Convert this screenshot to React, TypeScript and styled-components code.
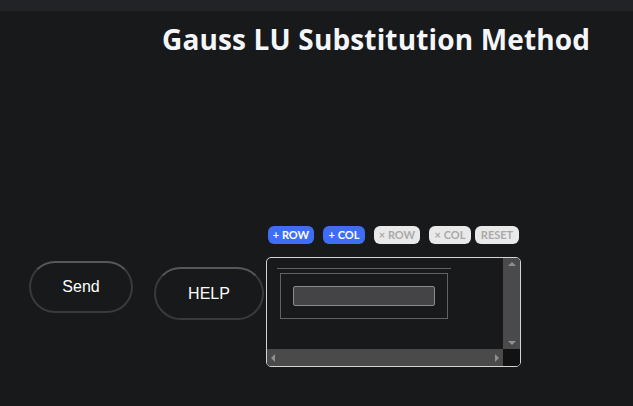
import React from "react";
import styled, { createGlobalStyle } from "styled-components";

const Global = createGlobalStyle`
  html, body { margin: 0; padding: 0; background: #18191b; }
  body { width: 633px; height: 406px; overflow: hidden; font-family: "Liberation Sans", Arial, sans-serif; }
  * { box-sizing: border-box; }
`;

const Page = styled.div`
  display: flex;
  flex-direction: column;
  width: 633px;
  height: 406px;
  background: #18191b;
`;

const TopBar = styled.div`
  height: 11px;
  background: #222326;
`;

const Title = styled.h1`
  margin: 10px 0 0 162px;
  font-family: "Open Sans", "Noto Sans", sans-serif;
  font-weight: 700;
  font-size: 28px;
  letter-spacing: 0.15px;
  line-height: 36px;
  color: #f4f6fa;
  white-space: nowrap;
`;

const Main = styled.div`
  display: flex;
  align-items: flex-start;
  margin-top: 169px;
  padding-left: 29px;
`;

const PillButton = styled.button<{ $w: number; $h: number; $top: number; $ml: number }>`
  width: ${(p) => p.$w}px;
  height: ${(p) => p.$h}px;
  margin-top: ${(p) => p.$top}px;
  margin-left: ${(p) => p.$ml}px;
  border-radius: 999px;
  background: #18191b;
  border: 2px solid #3a3a3b;
  border-top-color: #585859;
  color: #ffffff;
  font-family: "Liberation Sans", Arial, sans-serif;
  font-size: 16px;
  padding: 0;
  flex: none;
`;

const Panel = styled.div`
  display: flex;
  flex-direction: column;
  margin-left: 2px;
`;

const Toolbar = styled.div`
  display: flex;
  padding-left: 2px;
  height: 18px;
`;

const ToolButton = styled.button<{ $primary?: boolean; $w: number; $ml: number }>`
  width: ${(p) => p.$w}px;
  height: 18px;
  margin-left: ${(p) => p.$ml}px;
  padding: 0;
  border: none;
  border-radius: 6px;
  background: ${(p) => (p.$primary ? "#3d6ef5" : "#e9e9e9")};
  color: ${(p) => (p.$primary ? "#ffffff" : "#a9a9a9")};
  font-family: Lato, "Open Sans", sans-serif;
  font-weight: 700;
  font-size: 11px;
  line-height: 18px;
  white-space: nowrap;
  flex: none;
`;

const MatrixBox = styled.div`
  margin-top: 13px;
  width: 255px;
  height: 110px;
  border: 1px solid #d4d4d6;
  border-radius: 5px;
  overflow: hidden;
  background: #18191b;
  display: grid;
  grid-template-columns: 1fr 17px;
  grid-template-rows: 1fr 17px;
`;

const Content = styled.div`
  overflow: hidden;
  padding: 10px 0 0 10px;
`;

const Rule = styled.div`
  width: 174px;
  height: 1px;
  background: #5f6368;
`;

const Frame = styled.div`
  margin: 4px 0 0 3px;
  width: 168px;
  height: 46px;
  border: 1px solid #5f6368;
  padding: 12px 12px;
`;

const Cell = styled.input`
  display: block;
  width: 142px;
  height: 20px;
  background: #444446;
  border: 1px solid #8a8a8c;
  border-radius: 2px;
  padding: 0 4px;
  color: #fff;
  outline: none;
`;

const ScrollTrack = styled.div<{ $vertical?: boolean }>`
  background: #4a4a4a;
  display: flex;
  flex-direction: ${(p) => (p.$vertical ? "column" : "row")};
  justify-content: space-between;
  align-items: center;
  padding: ${(p) => (p.$vertical ? "4px 0" : "0 4px")};
`;

const Corner = styled.div`
  background: #121213;
`;

const Arrow = ({ dir }: { dir: "up" | "down" | "left" | "right" }) => {
  const pts: Record<string, string> = {
    up: "0,4 4,0 8,4",
    down: "0,0 8,0 4,4",
    left: "4,0 4,8 0,4",
    right: "0,0 0,8 4,4",
  };
  const vertical = dir === "up" || dir === "down";
  return (
    <svg width={vertical ? 8 : 4} height={vertical ? 4 : 8} viewBox={vertical ? "0 0 8 4" : "0 0 4 8"}>
      <polygon points={pts[dir]} fill="#8f8f8f" />
    </svg>
  );
};

export default function App() {
  return (
    <Page>
      <Global />
      <TopBar />
      <Title>Gauss LU Substitution Method</Title>
      <Main>
        <PillButton $w={104} $h={52} $top={35} $ml={0}>Send</PillButton>
        <PillButton $w={110} $h={53} $top={41} $ml={21}>HELP</PillButton>
        <Panel>
          <Toolbar>
            <ToolButton $primary $w={46} $ml={0}>+ ROW</ToolButton>
            <ToolButton $primary $w={42} $ml={9}>+ COL</ToolButton>
            <ToolButton $w={46} $ml={9}>× ROW</ToolButton>
            <ToolButton $w={42} $ml={9}>× COL</ToolButton>
            <ToolButton $w={44} $ml={4}>RESET</ToolButton>
          </Toolbar>
          <MatrixBox>
            <Content>
              <Rule />
              <Frame>
                <Cell />
              </Frame>
            </Content>
            <ScrollTrack $vertical>
              <Arrow dir="up" />
              <Arrow dir="down" />
            </ScrollTrack>
            <ScrollTrack>
              <Arrow dir="left" />
              <Arrow dir="right" />
            </ScrollTrack>
            <Corner />
          </MatrixBox>
        </Panel>
      </Main>
    </Page>
  );
}
